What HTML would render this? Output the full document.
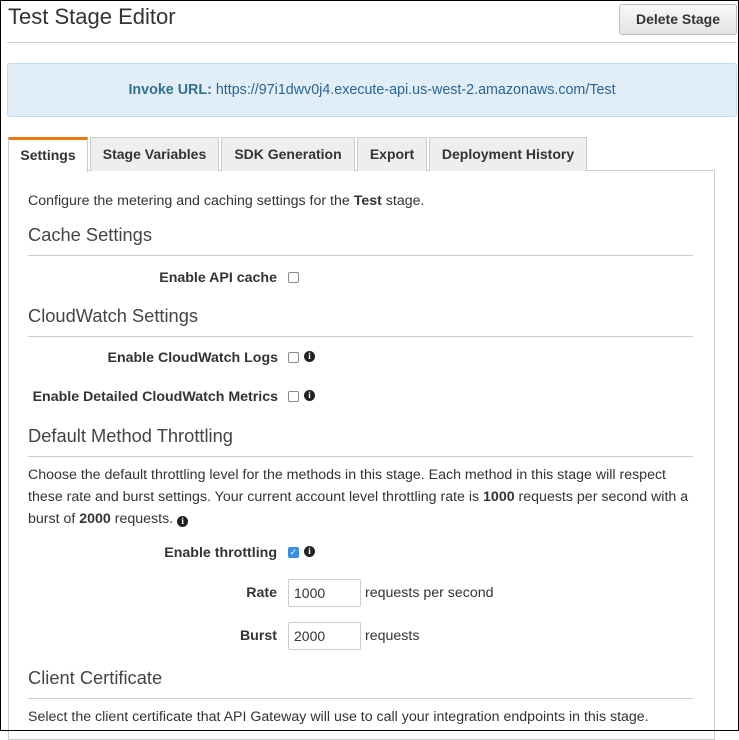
<!DOCTYPE html>
<html><head><meta charset="utf-8"><style>
*{margin:0;padding:0;box-sizing:border-box}
body{width:739px;height:731px;position:relative;overflow:hidden;background:#fff;font-family:"Liberation Sans",sans-serif;color:#333;font-size:14.2px}
.frame{position:absolute;left:0;top:0;width:739px;height:731px;border:1px solid #000;z-index:5}
.a{position:absolute;white-space:nowrap;line-height:16px}
.b{font-weight:bold}
.r{text-align:right}
.h{font-size:18.3px;line-height:20px;color:#444}
.hr{position:absolute;left:28px;width:665px;height:1px;background:#ccc}
.cb{position:absolute;width:11px;height:11px;border:1px solid #888;border-radius:2px;background:#fff}
.i{position:absolute;width:11px;height:11px;border-radius:50%;background:#222;color:#fff;font:bold 9px/11px "Liberation Serif",serif;text-align:center}
.tab{position:absolute;top:137px;height:34px;border:1px solid #ccc;border-bottom:none;background:#eee;font-weight:bold;font-size:14px;line-height:32px;text-align:center;color:#333}
.in{position:absolute;left:288px;width:73px;height:28px;border:1px solid #ccc;border-radius:2px;padding-left:5px;line-height:26px;font-size:14px}
</style></head><body>
<div class="frame"></div>
<div class="a" style="left:8px;top:4px;font-size:22px;line-height:26px;color:#333">Test Stage Editor</div>
<div class="a b" style="left:619px;top:4px;width:118px;height:31px;border:1px solid #bbb;border-radius:3px;background:linear-gradient(#f8f8f8,#e4e4e4);text-align:center;line-height:29px;font-size:14px">Delete Stage</div>
<div style="position:absolute;left:7px;top:42px;width:730px;height:1px;background:#ccc"></div>
<div style="position:absolute;left:7px;top:63px;width:730px;height:54px;background:#e1eef7;border:1px solid #c2dbec;border-radius:3px"></div>
<div class="a" style="left:7px;top:82px;width:730px;text-align:center;font-size:14.3px;line-height:17px;color:#2a6496"><span class="b" style="color:#31708f">Invoke URL:</span> https://97i1dwv0j4.execute-api.us-west-2.amazonaws.com/Test</div>
<div style="position:absolute;left:8px;top:170px;width:707px;height:570px;border:1px solid #ccc"></div>
<div class="tab" style="left:8px;width:80px;background:#fff;border-top:3px solid #e47911;height:35px;line-height:31px">Settings</div>
<div class="tab" style="left:90px;width:129px">Stage Variables</div>
<div class="tab" style="left:221px;width:134px">SDK Generation</div>
<div class="tab" style="left:357px;width:70px">Export</div>
<div class="tab" style="left:429px;width:158px">Deployment History</div>
<div class="a" style="left:28px;top:193px">Configure the metering and caching settings for the <b>Test</b> stage.</div>
<div class="a h" style="left:28px;top:225px">Cache Settings</div>
<div class="hr" style="top:255px"></div>
<div class="a b r" style="left:0;width:277px;top:270px">Enable API cache</div>
<div class="cb" style="left:288px;top:272px"></div>
<div class="a h" style="left:28px;top:306px">CloudWatch Settings</div>
<div class="hr" style="top:336px"></div>
<div class="a b r" style="left:0;width:278px;top:350px">Enable CloudWatch Logs</div>
<div class="cb" style="left:288px;top:352px"></div><div class="i" style="left:304px;top:351px">i</div>
<div class="a b r" style="left:0;width:278px;top:389px">Enable Detailed CloudWatch Metrics</div>
<div class="cb" style="left:288px;top:391px"></div><div class="i" style="left:304px;top:390px">i</div>
<div class="a h" style="left:28px;top:426px">Default Method Throttling</div>
<div class="hr" style="top:456px"></div>
<div class="a" style="left:28px;top:464px;line-height:22px;white-space:normal;width:665px">Choose the default throttling level for the methods in this stage. Each method in this stage will respect these rate and burst settings. Your current account level throttling rate is <b>1000</b> requests per second with a burst of <b>2000</b> requests. <span class="i" style="position:relative;display:inline-block;top:1px">i</span></div>
<div class="a b r" style="left:0;width:277px;top:545px">Enable throttling</div>
<div class="cb" style="left:288px;top:547px;background:#3b8fe0;border-color:#3b8fe0;color:#fff;font-size:9px;line-height:9px;text-align:center">✓</div>
<div class="i" style="left:304px;top:546px">i</div>
<div class="a b r" style="left:0;width:277px;top:585px">Rate</div>
<div class="in" style="top:579px">1000</div>
<div class="a" style="left:365px;top:585px">requests per second</div>
<div class="a b r" style="left:0;width:277px;top:628px">Burst</div>
<div class="in" style="top:622px">2000</div>
<div class="a" style="left:365px;top:628px">requests</div>
<div class="a h" style="left:28px;top:668px">Client Certificate</div>
<div class="hr" style="top:698px"></div>
<div class="a" style="left:28px;top:709px">Select the client certificate that API Gateway will use to call your integration endpoints in this stage.</div>
</body></html>
